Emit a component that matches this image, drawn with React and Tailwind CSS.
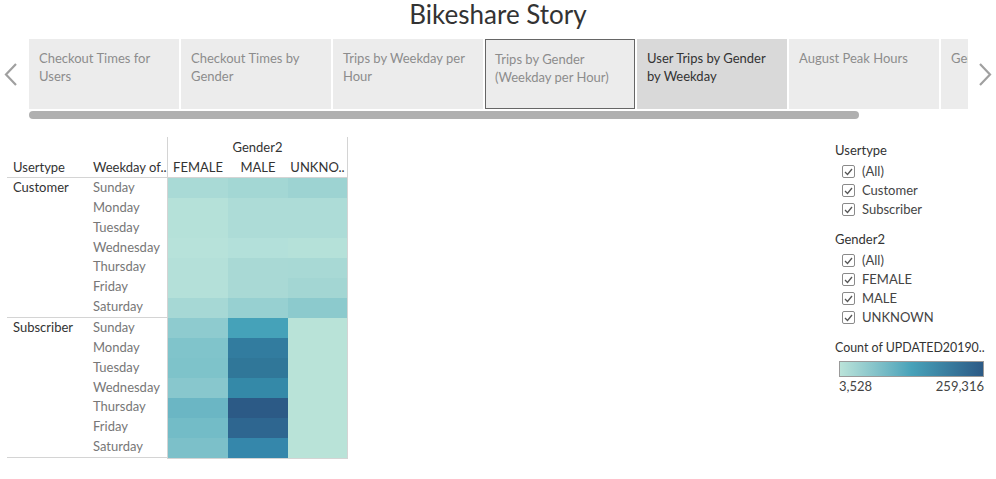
import React from 'react';

const tabs = [
  { label: 'Checkout Times for Users' },
  { label: 'Checkout Times by Gender' },
  { label: 'Trips by Weekday per Hour' },
  { label: 'Trips by Gender (Weekday per Hour)', outlined: true },
  { label: 'User Trips by Gender by Weekday', active: true },
  { label: 'August Peak Hours' },
  { label: 'Gender' },
];

const days = ['Sunday', 'Monday', 'Tuesday', 'Wednesday', 'Thursday', 'Friday', 'Saturday'];

// colours per row: FEMALE, MALE, UNKNOWN
const heat = [
  ['bg-[#a9dad6]', 'bg-[#a3d7d4]', 'bg-[#9dd3d2]'],
  ['bg-[#b5e1d9]', 'bg-[#addcd7]', 'bg-[#addcd7]'],
  ['bg-[#b5e1d9]', 'bg-[#addcd7]', 'bg-[#addcd7]'],
  ['bg-[#b7e2da]', 'bg-[#b3e0da]', 'bg-[#b5e1d9]'],
  ['bg-[#b4e0d9]', 'bg-[#a9d9d5]', 'bg-[#a8d9d5]'],
  ['bg-[#b4e0d9]', 'bg-[#a9d9d5]', 'bg-[#a3d6d3]'],
  ['bg-[#a6d8d5]', 'bg-[#97d0d1]', 'bg-[#8ccacd]'],
  ['bg-[#8ecbcf]', 'bg-[#45a2b9]', 'bg-[#b9e3d8]'],
  ['bg-[#80c4cb]', 'bg-[#327c9f]', 'bg-[#b9e3d8]'],
  ['bg-[#7ec3ca]', 'bg-[#307799]', 'bg-[#b9e3d8]'],
  ['bg-[#88c7cd]', 'bg-[#3489a8]', 'bg-[#b9e3d8]'],
  ['bg-[#6bb6c4]', 'bg-[#2c5a86]', 'bg-[#b9e3d8]'],
  ['bg-[#73bcc7]', 'bg-[#2e6690]', 'bg-[#b9e3d8]'],
  ['bg-[#7cc0c9]', 'bg-[#3587ab]', 'bg-[#b9e3d8]'],
];

function Chevron({ dir }) {
  const points = dir === 'left' ? '12,1 2,11.5 12,22' : '2,1 12,11.5 2,22';
  return (
    <svg width="14" height="23" viewBox="0 0 14 23">
      <polyline points={points} fill="none" stroke="#a0a0a0" strokeWidth="2.2" />
    </svg>
  );
}

function CheckBox({ label }) {
  return (
    <div className="h-[19px] flex items-center pl-[7px] gap-[7px]">
      <span className="w-[13px] h-[13px] border border-[#8a8a8a] rounded-[2px] flex items-center justify-center bg-white">
        <svg width="9" height="8" viewBox="0 0 9 8">
          <polyline points="1,4 3.5,6.5 8,1" fill="none" stroke="#555" strokeWidth="1.3" />
        </svg>
      </span>
      <span className="text-[13px] text-[#444]">{label}</span>
    </div>
  );
}

function LabelGroup({ name }) {
  return (
    <div className="flex h-[140px] border-b border-[#d4d4d4]">
      <div className="w-[80px] pl-[6px] text-[13px] text-[#333] leading-[19px]">{name}</div>
      <div className="w-[80px] flex flex-col">
        {days.map((d) => (
          <div key={d} className="h-[20px] leading-[19px] pl-[6px] text-[13px] text-[#777]">{d}</div>
        ))}
      </div>
    </div>
  );
}

export default function App() {
  return (
    <div className="w-[996px] h-[479px] bg-white overflow-hidden text-[#333]" style={{ fontFamily: 'Lato, "Open Sans", sans-serif' }}>
      {/* title */}
      <div className="h-[39px] pt-[1px] text-center text-[26px] leading-[26px] text-[#333]">Bikeshare Story</div>

      {/* story points */}
      <div className="flex h-[70px]">
        <div className="w-[29px] flex items-center pl-[4px]">
          <Chevron dir="left" />
        </div>
        <div className="w-[939px] flex gap-[2px] overflow-hidden">
          {tabs.map((t) => (
            <div
              key={t.label}
              className={`shrink-0 w-[150px] h-[70px] px-[10px] pt-[10px] text-[13px] leading-[18px] ${
                t.active ? 'bg-[#d9d9d9] text-[#333]' : 'bg-[#ececec] text-[#8c8c8c]'
              } ${t.outlined ? 'border border-[#666] pl-[9px] pt-[9px]' : ''}`}
            >
              {t.label}
            </div>
          ))}
        </div>
        <div className="flex-1 flex items-center justify-end pr-[4px]">
          <Chevron dir="right" />
        </div>
      </div>
      <div className="ml-[29px] mt-[2px] w-[830px] h-[8px] rounded-full bg-[#b0b0b0]"></div>

      {/* content */}
      <div className="flex justify-between">
        <div className="ml-[7px] mt-[18px] flex">
          <div className="w-[160px]">
            <div className="h-[41px] border-b border-[#d4d4d4] flex items-end text-[13px] text-[#333]">
              <div className="w-[80px] pl-[6px]">Usertype</div>
              <div className="w-[80px] pl-[6px] whitespace-nowrap">Weekday of..</div>
            </div>
            <LabelGroup name="Customer" />
            <LabelGroup name="Subscriber" />
          </div>
          <div className="w-[181px] border-l border-r border-[#d4d4d4]">
            <div className="h-[41px] border-b border-[#d4d4d4] text-[13px] text-[#333]">
              <div className="h-[20px] leading-[20px] text-center">Gender2</div>
              <div className="flex h-[20px] leading-[21px]">
                <div className="w-[60px] text-center">FEMALE</div>
                <div className="w-[60px] text-center">MALE</div>
                <div className="w-[59px] text-center">UNKNO..</div>
              </div>
            </div>
            <div className="border-b border-[#d4d4d4]">
              {heat.map((row, i) => (
                <div key={i} className="flex h-[20px]">
                  <div className={`w-[60px] ${row[0]}`}></div>
                  <div className={`w-[60px] ${row[1]}`}></div>
                  <div className={`w-[59px] ${row[2]}`}></div>
                </div>
              ))}
            </div>
          </div>
        </div>

        {/* legends */}
        <div className="w-[161px] mt-[23px]">
          <div className="h-[16px] leading-[16px] text-[13px] text-[#333] mb-[4px]">Usertype</div>
          <CheckBox label="(All)" />
          <CheckBox label="Customer" />
          <CheckBox label="Subscriber" />
          <div className="mt-[12px] h-[16px] leading-[16px] text-[13px] text-[#333] mb-[4px]">Gender2</div>
          <CheckBox label="(All)" />
          <CheckBox label="FEMALE" />
          <CheckBox label="MALE" />
          <CheckBox label="UNKNOWN" />
          <div className="mt-[13px] h-[16px] leading-[16px] text-[12.4px] text-[#333] whitespace-nowrap">Count of UPDATED20190..</div>
          <div className="mt-[5px] ml-[4px] w-[145px] h-[16px] border border-[#9a9a9a] bg-gradient-to-r from-[#bae3d9] via-[#48a2b9] to-[#2c5a86]"></div>
          <div className="ml-[4px] w-[145px] flex justify-between text-[13px] leading-[16px] mt-[1px] text-[#444]">
            <span>3,528</span>
            <span>259,316</span>
          </div>
        </div>
      </div>
    </div>
  );
}
